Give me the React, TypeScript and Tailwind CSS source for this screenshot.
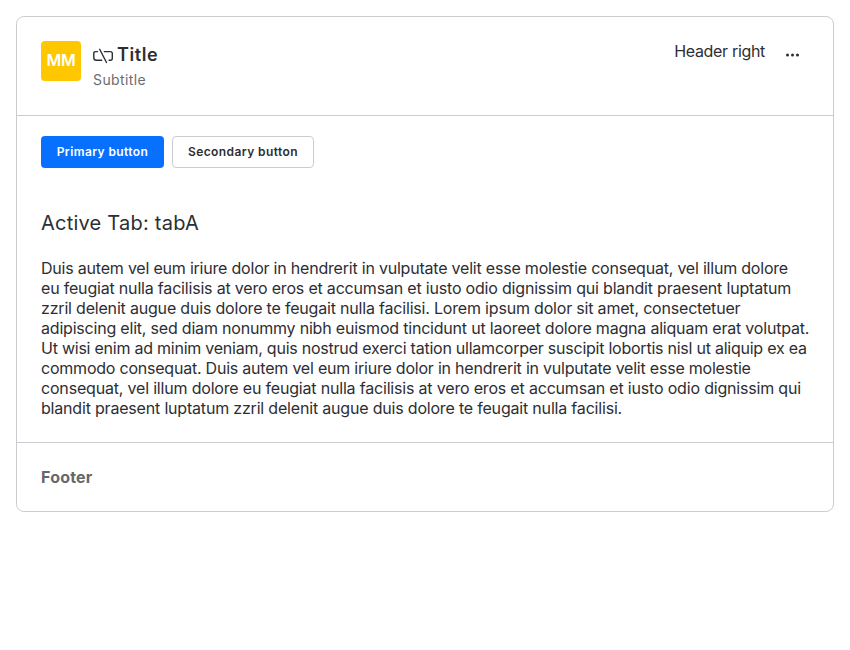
const lines = [
  { text: 'Duis autem vel eum iriure dolor in hendrerit in vulputate velit esse molestie consequat, vel illum dolore', tracking: 'tracking-[-0.21px]' },
  { text: 'eu feugiat nulla facilisis at vero eros et accumsan et iusto odio dignissim qui blandit praesent luptatum', tracking: 'tracking-[-0.19px]' },
  { text: 'zzril delenit augue duis dolore te feugait nulla facilisi. Lorem ipsum dolor sit amet, consectetuer', tracking: 'tracking-[-0.19px]' },
  { text: 'adipiscing elit, sed diam nonummy nibh euismod tincidunt ut laoreet dolore magna aliquam erat volutpat.', tracking: 'tracking-[-0.2px]' },
  { text: 'Ut wisi enim ad minim veniam, quis nostrud exerci tation ullamcorper suscipit lobortis nisl ut aliquip ex ea', tracking: 'tracking-[-0.24px]' },
  { text: 'commodo consequat. Duis autem vel eum iriure dolor in hendrerit in vulputate velit esse molestie', tracking: 'tracking-[-0.22px]' },
  { text: 'consequat, vel illum dolore eu feugiat nulla facilisis at vero eros et accumsan et iusto odio dignissim qui', tracking: 'tracking-[-0.185px]' },
  { text: 'blandit praesent luptatum zzril delenit augue duis dolore te feugait nulla facilisi.', tracking: 'tracking-[-0.19px]' },
];

export default function App() {
  return (
    <div className="p-4 font-['Inter',sans-serif] text-[#2d2e33]">
      <section className="w-[818px] h-[496px] rounded-lg border border-[#cbcccf] flex flex-col bg-white">
        <header className="h-[99px] border-b border-[#cbcccf] px-6 pt-6 flex items-start">
          <div className="size-10 rounded bg-[#ffc700] text-white text-base leading-[38px] font-semibold text-center tracking-[-0.3px]">MM</div>
          <div className="ml-3 grow">
            <div className="flex items-center gap-1 h-7">
              <svg className="w-5 h-5 relative top-px" viewBox="0 0 20 20" fill="none" stroke="currentColor" strokeWidth="1.4" strokeLinecap="round" strokeLinejoin="round">
                <path d="M4.5 5.6H2.7Q.8 5.6.8 7.6v3.9Q.8 14.3 3.3 14.3h5.4M11.3 5.6h6q2 0 2 2v4.7q0 2-2 2h-1.2M6.7 3.3l6.8 13.2" />
              </svg>
              <h1 className="text-lg leading-7 font-semibold tracking-[0.6px]">Title</h1>
            </div>
            <p className="text-sm leading-[22px] tracking-[0.4px] text-[#6c6d72]">Subtitle</p>
          </div>
          <div className="text-base leading-5 tracking-[-0.32px]">Header right</div>
          <svg className="ml-[18px] mr-[6px] mt-1 w-5 h-5" viewBox="0 0 20 20" fill="currentColor">
            <circle cx="4.5" cy="10" r="1.5" /><circle cx="9.5" cy="10" r="1.5" /><circle cx="14.5" cy="10" r="1.5" />
          </svg>
        </header>
        <main className="px-6 pt-5 h-[327px] border-b border-[#cbcccf]">
          <div className="flex gap-2">
            <button className="h-8 w-[123px] rounded bg-[#0770ff] text-white text-xs font-semibold tracking-[0.4px]">Primary button</button>
            <button className="h-8 w-[142px] rounded border border-[#cbcccf] text-xs font-semibold tracking-[0.42px]">Secondary button</button>
          </div>
          <h2 className="mt-10 text-xl leading-[30px] tracking-[0.23px]">Active Tab: tabA</h2>
          <p className="mt-5 text-base leading-5 whitespace-nowrap">
            {lines.map((line) => <span key={line.text} className={`block ${line.tracking}`}>{line.text}</span>)}
          </p>
        </main>
        <footer className="px-6 grow flex items-center text-base font-bold tracking-[0.2px] text-[#66676b]">Footer</footer>
      </section>
    </div>
  );
}
